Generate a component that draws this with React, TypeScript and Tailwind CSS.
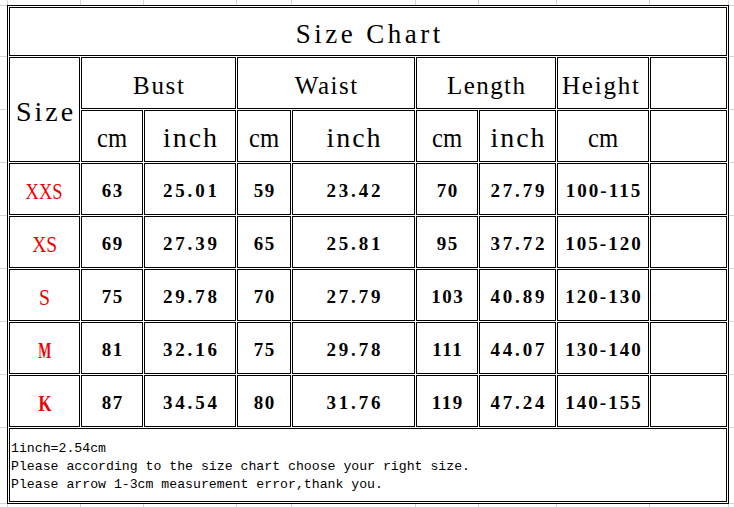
import React from "react";

const rows: string[][] = [
  ["XXS", "63", "25.01", "59", "23.42", "70", "27.79", "100-115"],
  ["XS", "69", "27.39", "65", "25.81", "95", "37.72", "105-120"],
  ["S", "75", "29.78", "70", "27.79", "103", "40.89", "120-130"],
  ["M", "81", "32.16", "75", "29.78", "111", "44.07", "130-140"],
  ["K", "87", "34.54", "80", "31.76", "119", "47.24", "140-155"],
];

const labelStyle: Record<string, string> = {
  XXS: "font-normal scale-x-[0.8]",
  XS: "font-normal scale-x-[0.85]",
  S: "font-normal scale-x-[0.86]",
  M: "font-bold scale-x-[0.6]",
  K: "font-bold scale-x-[0.73]",
};

const vx = [7, 80, 143, 236, 291, 415, 478, 556, 649, 728];
const hy = [5, 56, 109, 162, 215, 268, 321, 374, 427, 503];

const serif = "font-['Liberation_Serif',serif]";
const cell = "border border-black bg-white flex items-center justify-center";

function numTrack(v: string) {
  if (v.includes(".")) return "tracking-[2.8px] pl-[2.8px]";
  if (v.includes("-")) return "tracking-[2px] pl-[2px]";
  return "tracking-[1.5px] pl-[1.5px]";
}

export default function App() {
  return (
    <div className="relative w-[734px] h-[507px] bg-white overflow-hidden">
      <svg className="absolute inset-0" width={734} height={507} shapeRendering="crispEdges">
        {vx.map((x) => (
          <line key={"v" + x} x1={x + 0.5} y1={0} x2={x + 0.5} y2={507} stroke="#d4d4d4" strokeWidth={1} />
        ))}
        {hy.map((y) => (
          <line key={"h" + y} x1={0} y1={y + 0.5} x2={734} y2={y + 0.5} stroke="#d4d4d4" strokeWidth={1} />
        ))}
      </svg>
      <div className="relative pl-[7px] pt-[5px]">
        <div
          className={`grid w-[722px] grid-cols-[71px_62px_92px_54px_123px_62px_77px_92px_77px] grid-rows-[49px_52px_52px_52px_52px_52px_52px_52px_74px] gap-px p-px border border-black bg-white text-black ${serif}`}
        >
          <div className={`${cell} col-span-9 pt-[6px] text-[27px] tracking-[3.5px] pl-[3.5px]`}>Size Chart</div>

          <div className={`${cell} row-span-2 pt-[5px] text-[28px] tracking-[3px] pl-[3px]`}>Size</div>
          <div className={`${cell} col-span-2 pt-[5px] text-[25px] tracking-[1.7px] pl-[1.7px]`}>Bust</div>
          <div className={`${cell} col-span-2 pt-[5px] text-[25px] tracking-[1.5px] pl-[1.5px]`}>Waist</div>
          <div className={`${cell} col-span-2 pt-[5px] text-[25px] tracking-[1.4px] pl-[1.4px]`}>Length</div>
          <div className={`${cell} pt-[5px] pr-[5px] text-[25px] tracking-[1.8px] pl-[1.8px]`}>Height</div>
          <div className={cell}></div>

          {["cm", "inch", "cm", "inch", "cm", "inch", "cm"].map((u, i) => (
            <div key={"u" + i} className={`${cell} pt-[3px] text-[28px]`}>
              {u === "cm" ? (
                <span className="inline-block scale-x-[0.88]">cm</span>
              ) : (
                <span className="inline-block tracking-[2px] pl-[2px]">inch</span>
              )}
            </div>
          ))}
          <div className={cell}></div>

          {rows.map((r) => (
            <React.Fragment key={r[0]}>
              <div className={`${cell} pt-[6px] text-[23px] text-[#f00000]`}>
                <span className={`inline-block ${labelStyle[r[0]]}`}>{r[0]}</span>
              </div>
              {r.slice(1).map((v, i) => (
                <div key={r[0] + i} className={`${cell} pt-[5px] text-[19px] font-bold`}>
                  <span className={numTrack(v)}>{v}</span>
                </div>
              ))}
              <div className={cell}></div>
            </React.Fragment>
          ))}

          <div
            className={`col-span-9 border border-black bg-white flex flex-col items-start justify-start pt-[11px] pl-px font-['Liberation_Mono',monospace] text-[13.2px] leading-[18px] whitespace-pre`}
          >
            <div>1inch=2.54cm</div>
            <div>Please according to the size chart choose your right size.</div>
            <div>Please arrow 1-3cm measurement error,thank you.</div>
          </div>
        </div>
      </div>
    </div>
  );
}
